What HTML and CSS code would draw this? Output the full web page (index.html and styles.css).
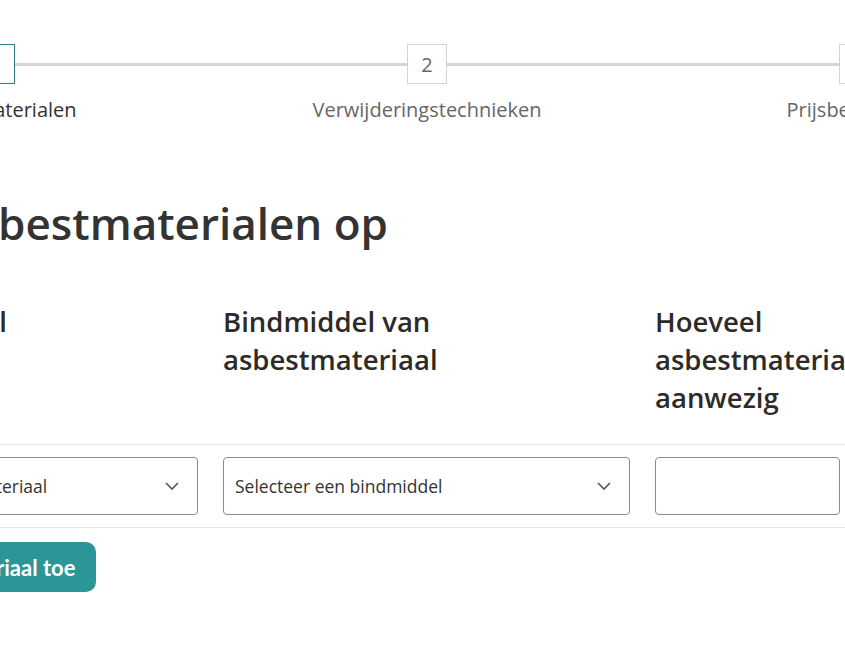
FILE: index.html
```html
<!DOCTYPE html>
<html lang="nl">
<head>
<meta charset="utf-8">
<title>Asbestmaterialen</title>
<link rel="stylesheet" href="styles.css">
</head>
<body>
<div class="page">
  <ol class="stepper">
    <li class="step step-active step-first">
      <div class="track"><span class="box">1</span></div>
      <span class="label">Asbestmaterialen</span>
    </li>
    <li class="step">
      <div class="track"><span class="box">2</span></div>
      <span class="label">Verwijderingstechnieken</span>
    </li>
    <li class="step step-last">
      <div class="track"><span class="box">3</span></div>
      <span class="label">Prijsberekening</span>
    </li>
  </ol>

  <h1 class="title">Geef de asbestmaterialen op</h1>

  <div class="table">
    <div class="row head">
      <div class="th">Asbestmateriaal</div>
      <div class="th">Bindmiddel van asbestmateriaal</div>
      <div class="th">Hoeveel asbestmateriaal aanwezig</div>
      <div class="th">Eenheid</div>
    </div>
    <div class="row body">
      <div class="td">
        <div class="select"><span>Selecteer een asbestmateriaal</span>
          <svg class="chev" viewBox="0 0 14 8" width="14" height="8"><path d="M1 1l6 6 6-6" fill="none" stroke="#555" stroke-width="1.6"/></svg>
        </div>
      </div>
      <div class="td">
        <div class="select"><span>Selecteer een bindmiddel</span>
          <svg class="chev" viewBox="0 0 14 8" width="14" height="8"><path d="M1 1l6 6 6-6" fill="none" stroke="#555" stroke-width="1.6"/></svg>
        </div>
      </div>
      <div class="td"><div class="input"></div></div>
      <div class="td"><div class="input"></div></div>
    </div>
  </div>

  <button class="btn">Voeg asbestmateriaal toe</button>
</div>
</body>
</html>
```
FILE: styles.css
```css
html, body {
  margin: 0;
  padding: 0;
  background: #fff;
  overflow: hidden;
}
body {
  font-family: "Open Sans", "Noto Sans", sans-serif;
  color: #333;
}
.page {
  margin-left: -210px;
  width: 1400px;
}
.stepper {
  list-style: none;
  margin: 44px 0 0 -11px;
  padding: 0;
  display: flex;
}
.step {
  width: 432px;
  display: flex;
  flex-direction: column;
  align-items: center;
}
.track {
  width: 100%;
  height: 40px;
  display: flex;
  align-items: center;
}
.track::before,
.track::after {
  content: "";
  flex: 1;
  height: 3px;
  background: #d5d5d5;
}
.step-first .track::before,
.step-last .track::after {
  background: transparent;
}
.box {
  box-sizing: border-box;
  width: 40px;
  height: 40px;
  border: 1px solid #d3d3d3;
  display: flex;
  align-items: center;
  justify-content: center;
  font-size: 20px;
  color: #666;
  background: #fff;
}
.step-active .box {
  border-color: #2a7a80;
  color: #2a7a80;
}
.label {
  margin-top: 12px;
  font-size: 20px;
  line-height: 28px;
  color: #666;
  white-space: nowrap;
}
.step-active .label {
  color: #333;
}
.title {
  margin: 73px 0 0 -13px;
  font-size: 44px;
  line-height: 52px;
  font-weight: 600;
  color: #333;
}
.table {
  margin-top: 54px;
}
.row {
  display: grid;
  grid-template-columns: 408px 407px 185px 300px;
  column-gap: 25px;
}
.head {
  padding-bottom: 27px;
  border-bottom: 1px solid #e3e3e3;
}
.th {
  font-size: 27.5px;
  line-height: 38px;
  font-weight: 600;
  color: #2d2a27;
}
.body {
  padding: 12px 0 12px;
  border-bottom: 1px solid #e3e3e3;
}
.select,
.input {
  box-sizing: border-box;
  height: 58px;
  border: 1px solid #8c8c8c;
  border-radius: 4px;
  background: #fff;
}
.select {
  display: flex;
  align-items: center;
  justify-content: space-between;
  padding: 0 18px 0 11px;
  font-size: 17.5px;
  color: #333;
}
.chev {
  display: block;
}
.btn {
  margin-top: 14px;
  height: 50px;
  padding: 0 20px 0 39px;
  border: 0;
  border-radius: 10px;
  background: #2b9597;
  color: #fff;
  font-family: "Lato", "Open Sans", sans-serif;
  font-size: 22px;
  font-weight: 700;
}
```
